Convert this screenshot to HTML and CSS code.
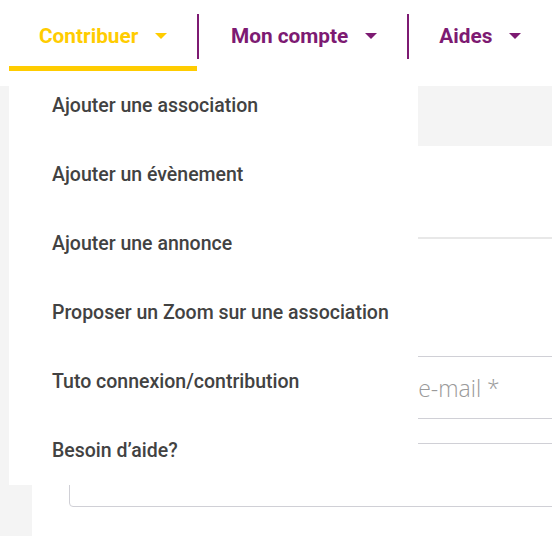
FILE: index.html
```html
<!DOCTYPE html>
<html lang="fr">
<head>
<meta charset="utf-8">
<link rel="stylesheet" href="styles.css">
</head>
<body>
<header class="topbar">
  <nav class="nav">
    <div class="nav-item active">
      <span class="label">Contribuer</span><span class="caret"></span>
    </div>
    <span class="sep"></span>
    <div class="nav-item">
      <span class="label">Mon compte</span><span class="caret"></span>
    </div>
    <span class="sep"></span>
    <div class="nav-item last">
      <span class="label">Aides</span><span class="caret"></span>
    </div>
  </nav>
  <ul class="dropdown">
    <li>Ajouter une association</li>
    <li>Ajouter un évènement</li>
    <li>Ajouter une annonce</li>
    <li>Proposer un Zoom sur une association</li>
    <li>Tuto connexion/contribution</li>
    <li>Besoin d’aide?</li>
  </ul>
</header>
<main class="page">
  <div class="content">
    <div class="banner"></div>
    <div class="form">
      <div class="rule"></div>
      <input class="field" type="text" placeholder="Identifiant ou e-mail *">
      <div class="textarea"></div>
    </div>
  </div>
</main>
</body>
</html>
```
FILE: styles.css
```css
html, body {
  margin: 0;
  padding: 0;
}
body {
  width: 552px;
  height: 536px;
  overflow: hidden;
  background: #f4f4f4;
  font-family: Roboto, "Liberation Sans", sans-serif;
  position: relative;
}
.topbar {
  background: #fff;
  height: 86px;
  position: relative;
  z-index: 2;
}
.nav {
  display: flex;
  align-items: flex-start;
  padding-left: 9px;
  height: 86px;
  box-sizing: border-box;
  overflow: hidden;
}
.nav-item {
  position: relative;
  display: flex;
  flex: none;
  align-items: center;
  height: 66px;
  padding: 6px 30px 0 32px;
  box-sizing: border-box;
  color: #7d1a72;
  font-size: 20.8px;
  font-weight: 700;
  white-space: nowrap;
}
.nav-item.last {
  padding-left: 30px;
}
.nav-item.active {
  color: #ffcc00;
  width: 188px;
  padding-left: 30px;
}
.nav-item.active::after {
  content: "";
  position: absolute;
  left: 0;
  right: 0;
  top: 66px;
  height: 5px;
  background: #ffcc00;
}
.caret {
  display: inline-block;
  width: 0;
  height: 0;
  border-left: 6px solid transparent;
  border-right: 6px solid transparent;
  border-top: 6px solid currentColor;
  margin-left: 17px;
}
.sep {
  display: block;
  flex: none;
  width: 2px;
  height: 45px;
  margin-top: 14px;
  background: #7d1a72;
}
.dropdown {
  position: absolute;
  left: 9px;
  top: 86px;
  width: 409px;
  height: 399px;
  margin: 0;
  padding: 3px 0 0 43px;
  box-sizing: border-box;
  list-style: none;
  background: #fff;
}
.dropdown li {
  height: 69px;
  line-height: 34px;
  font-size: 19.5px;
  font-weight: 500;
  color: #424242;
  white-space: nowrap;
}
.page {
  padding-left: 32px;
}
.content {
  background: #fff;
  height: 450px;
}
.banner {
  height: 60px;
  background: #f4f4f4;
}
.form {
  padding-left: 37px;
  overflow: hidden;
}
.rule {
  height: 91px;
  border-bottom: 2px solid #e8e8e8;
}
.field {
  display: block;
  margin-top: 117px;
  width: 520px;
  height: 63px;
  box-sizing: border-box;
  border: 1px solid #d0d0d6;
  padding: 0 0 0 205px;
  font-family: "Open Sans", sans-serif;
  font-weight: 300;
  font-size: 23px;
  color: #999;
  outline: none;
  background: #fff;
}
.field::placeholder {
  color: #9a9a9a;
  font-weight: 300;
}
.textarea {
  margin-top: 24px;
  width: 520px;
  height: 64px;
  box-sizing: border-box;
  border: 1px solid #d0d0d6;
  border-radius: 4px;
}
```
